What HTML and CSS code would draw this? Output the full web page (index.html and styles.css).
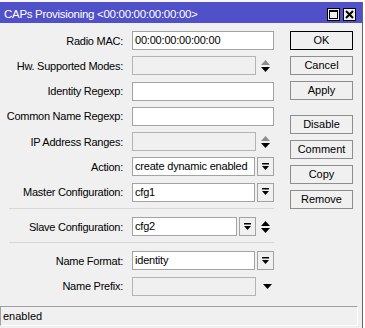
FILE: index.html
```html
<!DOCTYPE html>
<html lang="en">
<head>
    <meta charset="UTF-8">
    <title>CAPs Provisioning</title>
    <link rel="stylesheet" href="styles.css">
</head>
<body>
    <div class="topstrip"></div>
    <div class="window">
        <div class="titlebar">
            <span class="title">CAPs Provisioning &lt;00:00:00:00:00:00&gt;</span>
            <div class="title-buttons">
                <span class="tbtn">
                    <svg width="11" height="11" viewBox="0 0 11 11"><rect x="1.5" y="1.5" width="8" height="8" fill="none" stroke="#000" stroke-width="1"/><rect x="1" y="1" width="9" height="2" fill="#000"/></svg>
                </span>
                <span class="tbtn">
                    <svg width="11" height="11" viewBox="0 0 11 11"><path d="M2 2 L9 9 M9 2 L2 9" stroke="#000" stroke-width="2"/></svg>
                </span>
            </div>
        </div>

        <div class="content">
            <div class="form">
                <div class="row">
                    <span class="label">Radio MAC:</span>
                    <div class="field"><div class="input">00:00:00:00:00:00</div></div>
                </div>
                <div class="row">
                    <span class="label">Hw. Supported Modes:</span>
                    <div class="field">
                        <div class="input short disabled"></div>
                        <span class="updown">
                            <svg width="9" height="12" viewBox="0 0 9 12"><polygon points="0,5 9,5 4.5,0" fill="#8c8c8c"/><polygon points="0,7 9,7 4.5,12" fill="#000"/></svg>
                        </span>
                    </div>
                </div>
                <div class="row">
                    <span class="label">Identity Regexp:</span>
                    <div class="field"><div class="input"></div></div>
                </div>
                <div class="row">
                    <span class="label">Common Name Regexp:</span>
                    <div class="field"><div class="input"></div></div>
                </div>
                <div class="row">
                    <span class="label">IP Address Ranges:</span>
                    <div class="field">
                        <div class="input short disabled"></div>
                        <span class="updown">
                            <svg width="9" height="12" viewBox="0 0 9 12"><polygon points="0,5 9,5 4.5,0" fill="#8c8c8c"/><polygon points="0,7 9,7 4.5,12" fill="#000"/></svg>
                        </span>
                    </div>
                </div>
                <div class="row">
                    <span class="label">Action:</span>
                    <div class="field">
                        <div class="input grow">create dynamic enabled</div>
                        <span class="drop"><svg width="9" height="8" viewBox="0 0 9 8"><rect x="1" y="0" width="7" height="1.5" fill="#000"/><polygon points="1,3 8,3 4.5,7" fill="#000"/></svg></span>
                    </div>
                </div>
                <div class="row">
                    <span class="label">Master Configuration:</span>
                    <div class="field">
                        <div class="input grow">cfg1</div>
                        <span class="drop"><svg width="9" height="8" viewBox="0 0 9 8"><rect x="1" y="0" width="7" height="1.5" fill="#000"/><polygon points="1,3 8,3 4.5,7" fill="#000"/></svg></span>
                    </div>
                </div>

                <div class="separator"></div>

                <div class="row">
                    <span class="label">Slave Configuration:</span>
                    <div class="field">
                        <div class="input slave">cfg2</div>
                        <span class="drop"><svg width="9" height="8" viewBox="0 0 9 8"><rect x="1" y="0" width="7" height="1.5" fill="#000"/><polygon points="1,3 8,3 4.5,7" fill="#000"/></svg></span>
                        <span class="updown">
                            <svg width="9" height="12" viewBox="0 0 9 12"><polygon points="0,5 9,5 4.5,0" fill="#000"/><polygon points="0,7 9,7 4.5,12" fill="#000"/></svg>
                        </span>
                    </div>
                </div>

                <div class="separator"></div>

                <div class="row">
                    <span class="label">Name Format:</span>
                    <div class="field">
                        <div class="input grow">identity</div>
                        <span class="drop"><svg width="9" height="8" viewBox="0 0 9 8"><rect x="1" y="0" width="7" height="1.5" fill="#000"/><polygon points="1,3 8,3 4.5,7" fill="#000"/></svg></span>
                    </div>
                </div>
                <div class="row">
                    <span class="label">Name Prefix:</span>
                    <div class="field">
                        <div class="input short disabled"></div>
                        <span class="down">
                            <svg width="9" height="5" viewBox="0 0 9 5"><polygon points="0,0 9,0 4.5,5" fill="#000"/></svg>
                        </span>
                    </div>
                </div>
            </div>

            <div class="buttons">
                <a href="#" class="btn default">OK</a>
                <a href="#" class="btn">Cancel</a>
                <a href="#" class="btn">Apply</a>
                <a href="#" class="btn group">Disable</a>
                <a href="#" class="btn">Comment</a>
                <a href="#" class="btn">Copy</a>
                <a href="#" class="btn">Remove</a>
            </div>
        </div>

        <div class="statusbar">enabled</div>
    </div>
</body>
</html>
```

FILE: styles.css
```css
body {
    margin: 0;
    padding: 0;
    font-family: "Liberation Sans", Arial, sans-serif;
    font-size: 11px;
    color: #000;
    background-color: #fff;
    width: 365px;
    height: 328px;
    overflow: hidden;
}

.topstrip {
    height: 2px;
    background-color: #f7f7f7;
}

.window {
    width: 362px;
    height: 326px;
    background-color: #f0f0f0;
    border-right: 1px solid #646464;
    display: flex;
    flex-direction: column;
}

.titlebar {
    height: 21px;
    background-color: #5050c8;
    display: flex;
    align-items: center;
    justify-content: space-between;
    padding: 0 6px 0 4px;
}

.title {
    color: #fff;
    font-size: 11.5px;
    letter-spacing: -0.3px;
    padding-top: 2px;
}

.title-buttons {
    display: flex;
    gap: 3px;
    padding-top: 3px;
}

.tbtn {
    width: 13px;
    height: 13px;
    background-color: #f0f0f0;
    border: 1px solid #000;
    box-sizing: border-box;
    display: flex;
    align-items: center;
    justify-content: center;
}

.content {
    flex: 1;
    display: flex;
    padding-top: 8px;
}

.form {
    width: 274px;
}

.row {
    display: flex;
    align-items: center;
    height: 19px;
    margin-bottom: 6.3px;
}

.label {
    width: 123px;
    margin-right: 9px;
    text-align: right;
    letter-spacing: -0.25px;
    white-space: nowrap;
}

.field {
    width: 142px;
    height: 19px;
    display: flex;
    align-items: center;
    gap: 2px;
}

.input {
    width: 142px;
    height: 19px;
    box-sizing: border-box;
    border: 1px solid #a3a3a3;
    background-color: #fff;
    padding: 0 2px;
    line-height: 17px;
    letter-spacing: -0.2px;
    white-space: nowrap;
    overflow: hidden;
}

.input.grow {
    width: auto;
    flex: 1;
}

.input.short {
    width: 124px;
}

.input.slave {
    width: 105px;
}

.input.disabled {
    background-color: #f0f0f0;
    border-color: #b4b4b4;
}

.drop {
    width: 17px;
    height: 19px;
    box-sizing: border-box;
    border: 1px solid #a3a3a3;
    background-color: #f0f0f0;
    display: flex;
    align-items: center;
    justify-content: center;
}

.updown {
    margin-left: 3px;
    display: flex;
    align-items: center;
}

.down {
    margin-left: 5px;
    display: flex;
    align-items: center;
}

.separator {
    height: 1px;
    background-color: #d7d7d7;
    margin: 5px 0 8px 9px;
}

.buttons {
    margin-left: 16px;
    display: flex;
    flex-direction: column;
    gap: 6px;
}

.btn {
    width: 63px;
    height: 19px;
    box-sizing: border-box;
    border: 1px solid #8e8e8e;
    background-color: #f0f0f0;
    color: #000;
    text-decoration: none;
    text-align: center;
    line-height: 17px;
}

.btn.default {
    border-color: #000;
}

.btn.group {
    margin-top: 9px;
}

.statusbar {
    height: 20px;
    margin: 0 4px 2px 0;
    box-sizing: border-box;
    border-top: 1px solid #a0a0a0;
    border-left: 1px solid #a0a0a0;
    border-bottom: 1px solid #fff;
    border-right: 1px solid #fff;
    padding-left: 2px;
    line-height: 18px;
}
```
